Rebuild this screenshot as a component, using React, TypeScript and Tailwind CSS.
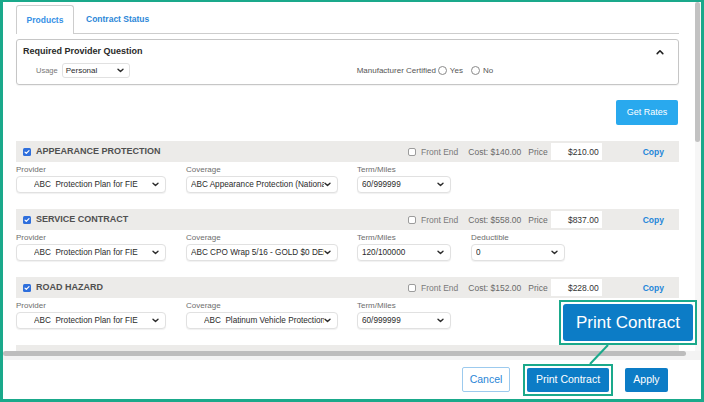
import React from 'react';

type Row = {
  title: string;
  cost: string;
  price: string;
  provider: string;
  providerPad: string;
  coverage: string;
  coveragePad: string;
  term: string;
  deductible?: string;
};

const rows: Row[] = [
  {
    title: 'APPEARANCE PROTECTION',
    cost: '$140.00',
    price: '$210.00',
    provider: 'ABC  Protection Plan for FIE',
    providerPad: 'pl-[17px]',
    coverage: 'ABC Appearance Protection (National)',
    coveragePad: 'pl-[4px]',
    term: '60/999999',
  },
  {
    title: 'SERVICE CONTRACT',
    cost: '$558.00',
    price: '$837.00',
    provider: 'ABC  Protection Plan for FIE',
    providerPad: 'pl-[17px]',
    coverage: 'ABC CPO Wrap 5/16 - GOLD $0 DED',
    coveragePad: 'pl-[4px]',
    term: '120/100000',
    deductible: '0',
  },
  {
    title: 'ROAD HAZARD',
    cost: '$152.00',
    price: '$228.00',
    provider: 'ABC  Protection Plan for FIE',
    providerPad: 'pl-[17px]',
    coverage: 'ABC  Platinum Vehicle Protection',
    coveragePad: 'pl-[17px]',
    term: '60/999999',
  },
];

function ChevronDown() {
  return (
    <svg width="7" height="5" viewBox="0 0 7 5" className="shrink-0">
      <path d="M1 1.2l2.5 2.4L6 1.2" fill="none" stroke="#2b2b2b" strokeWidth="1.4" strokeLinecap="round" strokeLinejoin="round" />
    </svg>
  );
}

function Select({ text, className, pad }: { text: string; className: string; pad: string }) {
  return (
    <div
      className={`flex h-[17px] items-center rounded-[4px] border border-[#e1e1e1] bg-white pr-[6px] shadow-[0_1px_1px_rgba(0,0,0,0.06)] ${className} ${pad}`}
    >
      <span className="min-w-0 flex-1 overflow-hidden whitespace-pre text-[8.2px] leading-[10px] text-[#2b2b2b]">{text}</span>
      <ChevronDown />
    </div>
  );
}

function CheckedBox() {
  return (
    <div className="flex h-[8px] w-[8px] items-center justify-center rounded-[1.5px] bg-[#2f6fdc]">
      <svg width="6" height="6" viewBox="0 0 6 6">
        <path d="M1 3.1l1.3 1.3L5 1.6" fill="none" stroke="#fff" strokeWidth="1.2" strokeLinecap="round" strokeLinejoin="round" />
      </svg>
    </div>
  );
}

function Product({ row }: { row: Row }) {
  return (
    <div className="mb-[16px]">
      <div className="flex h-[21px] items-center bg-[#ecebe9] pl-[7px]">
        <div className="flex w-[385px] items-center gap-[5px]">
          <CheckedBox />
          <span className="text-[9px] font-bold leading-[11px] text-[#505050]">{row.title}</span>
        </div>
        <div className="h-[8px] w-[8px] rounded-[2px] border border-[#9c9c9c] bg-white" />
        <span className="ml-[5px] text-[8.5px] leading-[10px] text-[#7a7a7a]">Front End</span>
        <span className="ml-[10px] text-[8.5px] leading-[10px] text-[#6a6a6a]">Cost: {row.cost}</span>
        <span className="ml-[7px] text-[8.5px] leading-[10px] text-[#6a6a6a]">Price</span>
        <div className="ml-[3px] flex h-[17px] w-[51px] items-center justify-end bg-white pr-[3px] text-[8.5px] leading-[10px] text-[#333]">
          {row.price}
        </div>
        <span className="ml-[41px] text-[8.5px] font-bold leading-[10px] text-[#1f86d9]">Copy</span>
      </div>
      <div className="flex">
        <div className="w-[150px]">
          <div className="h-[14px] pt-[3px] text-[8px] leading-[10px] text-[#6d6d6d]">Provider</div>
          <Select text={row.provider} className="w-[150px]" pad={row.providerPad} />
        </div>
        <div className="ml-[20px] w-[152px]">
          <div className="h-[14px] pt-[3px] text-[8px] leading-[10px] text-[#6d6d6d]">Coverage</div>
          <Select text={row.coverage} className="w-[152px]" pad={row.coveragePad} />
        </div>
        <div className="ml-[19px] w-[94px]">
          <div className="h-[14px] pt-[3px] text-[8px] leading-[10px] text-[#6d6d6d]">Term/Miles</div>
          <Select text={row.term} className="w-[94px]" pad="pl-[4px]" />
        </div>
        {row.deductible !== undefined && (
          <div className="ml-[20px] w-[94px]">
            <div className="h-[14px] pt-[3px] text-[8px] leading-[10px] text-[#6d6d6d]">Deductible</div>
            <Select text={row.deductible} className="w-[94px]" pad="pl-[4px]" />
          </div>
        )}
      </div>
    </div>
  );
}

export default function App() {
  return (
    <div className="relative h-[402px] w-[704px] overflow-hidden border-x-[3px] border-b-[3px] border-t-2 border-[#1aa98b] bg-white font-['Liberation_Sans',Arial,sans-serif]">
      <div className="flex h-[349px]">
        <div className="flex min-w-0 flex-1 flex-col overflow-hidden pl-[13px] pr-[16px] pt-[3px]">
          {/* tabs */}
          <div className="flex h-[29px] shrink-0 items-end border-b border-[#cdcdcd]">
            <div className="-mb-px flex h-[29px] w-[58px] items-center justify-center rounded-t-[3px] border border-b-0 border-[#cdcdcd] bg-white text-[8.5px] font-bold text-[#3590e6]">
              Products
            </div>
            <div className="ml-[12px] flex h-[28px] items-center text-[8.5px] font-bold text-[#2c87d8]">Contract Status</div>
          </div>

          {/* required provider question */}
          <div className="mt-[5px] h-[46px] shrink-0 rounded-[3px] border border-[#c6c6c6] pl-[6px] pr-[14px] pt-[6px] shadow-[0_1px_1px_rgba(0,0,0,0.05)]">
            <div className="flex items-center justify-between">
              <span className="text-[9px] font-bold leading-[11px] text-[#2a2a2a]">Required Provider Question</span>
              <svg width="8" height="6" viewBox="0 0 8 6">
                <path d="M1.2 4.6L4 1.8l2.8 2.8" fill="none" stroke="#222" strokeWidth="1.6" strokeLinecap="round" strokeLinejoin="round" />
              </svg>
            </div>
            <div className="mt-[6px] flex h-[15px] items-center pl-[13px]">
              <span className="text-[7.5px] text-[#777]">Usage</span>
              <div className="ml-[4px] flex h-[15px] w-[68px] items-center rounded-[3px] border border-[#e1e1e1] bg-white pl-[3px] pr-[5px]">
                <span className="flex-1 text-[8px] text-[#2b2b2b]">Personal</span>
                <ChevronDown />
              </div>
              <span className="ml-[227px] text-[8px] text-[#555]">Manufacturer Certified</span>
              <div className="ml-[2px] h-[9px] w-[9px] rounded-full border border-[#8a8a8a] bg-white" />
              <span className="ml-[3px] text-[8px] text-[#555]">Yes</span>
              <div className="ml-[8px] h-[9px] w-[9px] rounded-full border border-[#8a8a8a] bg-white" />
              <span className="ml-[3px] text-[8px] text-[#555]">No</span>
            </div>
          </div>

          <div className="mr-[1px] mt-[15px] flex h-[25px] w-[62px] shrink-0 items-center justify-center self-end rounded-[2px] bg-[#29a9ee] text-[9px] text-white">
            Get Rates
          </div>

          <div className="mt-[16px] shrink-0">
            {rows.map((row, i) => (
              <Product key={i} row={row} />
            ))}
            <div className="h-[21px] bg-[#ecebe9]" />
          </div>
        </div>

        {/* vertical scrollbar */}
        <div className="w-[6px] shrink-0 bg-[#f6f6f6]">
          <div className="h-[140px] w-[5px] rounded-full bg-[#c2c2c2]" />
        </div>
      </div>

      {/* horizontal scrollbar */}
      <div className="h-[9px] bg-[#f3f3f3]">
        <div className="h-[5px] w-[683px] rounded-full bg-[#bdbdbd]" />
      </div>

      {/* footer */}
      <div className="flex h-[39px] items-center justify-end pr-[33px]">
        <button className="flex h-[25px] w-[48px] items-center justify-center rounded-[2px] border border-[#9ccaee] bg-white text-[10.5px] text-[#2a86d6]">
          Cancel
        </button>
        <div className="ml-[13px] border-2 border-[#1aa98b] p-[2px]">
          <button className="flex h-[24px] w-[82px] items-center justify-center rounded-[2px] bg-[#0c7cc6] text-[10.5px] text-white">
            Print Contract
          </button>
        </div>
        <button className="ml-[12px] flex h-[24px] w-[43px] items-center justify-center rounded-[2px] bg-[#0c7cc6] text-[10.5px] text-white">
          Apply
        </button>
      </div>

      {/* callout */}
      <svg width="704" height="402" className="pointer-events-none absolute -left-[3px] -top-[2px]">
        <line x1="608" y1="345" x2="590" y2="364" stroke="#1aa98b" strokeWidth="2" />
      </svg>
      <div className="absolute left-[556px] top-[298px] h-[45px] w-[138px] border-2 border-[#1aa98b] bg-white p-[2px]">
        <div className="flex h-full w-full items-center justify-center rounded-[3px] bg-[#0c7cc6] text-[17px] text-white">
          Print Contract
        </div>
      </div>
    </div>
  );
}
